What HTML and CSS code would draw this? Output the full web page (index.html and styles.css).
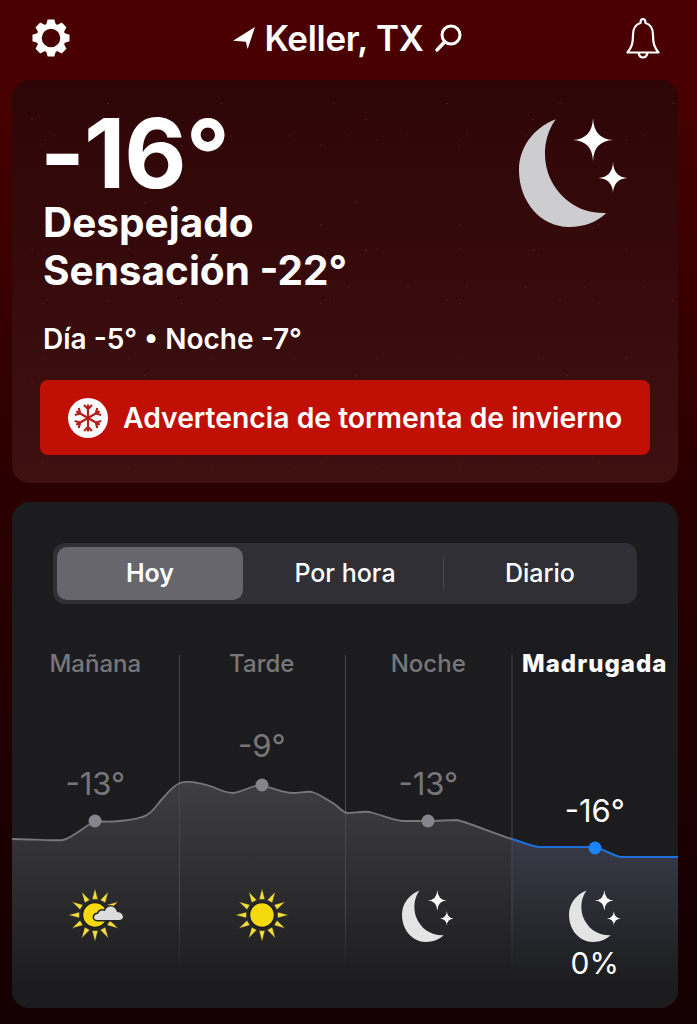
FILE: index.html
```html
<!DOCTYPE html>
<html lang="es">
<head>
  <meta charset="UTF-8" />
  <meta name="viewport" content="width=device-width, initial-scale=1" />
  <title>Keller, TX</title>
  <link rel="stylesheet" href="styles.css">
</head>
<body>

  <svg class="defs" width="0" height="0" aria-hidden="true">
    <symbol id="moon" viewBox="0 0 109 109">
      <path class="moon-body" d="M36.7 1.3C14 10 0 30 0 52C0 84 22 109 50 109C65 109 78 104 87.3 95C60 96 38 80 29 55C23 36 26 16 36.7 1.3Z" />
      <path class="moon-star" d="M74 0Q74.800 21 94 22Q74.800 23 74 43Q73.200 23 54 22Q73.200 21 74 0Z" />
      <path class="moon-star" d="M94 44Q94.700 59 108.500 60Q94.700 61 94 75Q93.300 61 79.500 60Q93.300 59 94 44Z" />
    </symbol>
    <symbol id="sun" viewBox="-28 -28 56 56">
      <g class="sun-rays">
        <path id="ray" d="M-3 -15.500L0 -27L3 -15.500Z" />
        <use href="#ray" transform="rotate(30)" />
        <use href="#ray" transform="rotate(60)" />
        <use href="#ray" transform="rotate(90)" />
        <use href="#ray" transform="rotate(120)" />
        <use href="#ray" transform="rotate(150)" />
        <use href="#ray" transform="rotate(180)" />
        <use href="#ray" transform="rotate(210)" />
        <use href="#ray" transform="rotate(240)" />
        <use href="#ray" transform="rotate(270)" />
        <use href="#ray" transform="rotate(300)" />
        <use href="#ray" transform="rotate(330)" />
      </g>
      <circle class="sun-disc" r="12.500" />
    </symbol>
  </svg>

  <header class="topbar">
    <svg class="icon-gear" viewBox="-20 -20 40 40" width="38" height="38" aria-hidden="true">
      <circle r="12.500" fill="none" stroke="#fff" stroke-width="5.500" />
      <g fill="#fff">
        <path id="tooth" d="M-3.500 -19.500H3.500L5.500 -13H-5.500Z" />
        <use href="#tooth" transform="rotate(45)" />
        <use href="#tooth" transform="rotate(90)" />
        <use href="#tooth" transform="rotate(135)" />
        <use href="#tooth" transform="rotate(180)" />
        <use href="#tooth" transform="rotate(225)" />
        <use href="#tooth" transform="rotate(270)" />
        <use href="#tooth" transform="rotate(315)" />
      </g>
    </svg>
    <div class="place">
      <svg viewBox="0 0 24 24" width="22" height="22" aria-hidden="true">
        <path d="M24 0L0 15L14 16L16 24Z" fill="#fff" />
      </svg>
      <span class="place-name">Keller, TX</span>
      <svg viewBox="0 0 30 30" width="30" height="30" aria-hidden="true">
        <circle cx="18" cy="12" r="9" fill="none" stroke="#fff" stroke-width="3" />
        <path d="M11.500 19L4 27" stroke="#fff" stroke-width="3.500" stroke-linecap="round" />
      </svg>
    </div>
    <svg class="icon-bell" viewBox="0 0 34 42" width="34" height="42" aria-hidden="true">
      <path d="M17 2C15 2 14.500 4 14.500 6C9 7.500 7 12 7 18C7 26 6 30 1.500 35.500H32.500C28 30 27 26 27 18C27 12 25 7.500 19.500 6C19.500 4 19 2 17 2ZM12.500 35.500C13 39 15 40.500 17 40.500C19 40.500 21 39 21.500 35.500" fill="none" stroke="#fff" stroke-width="2.200" stroke-linejoin="round" />
    </svg>
  </header>

  <section class="card now">
    <div class="now-row">
      <div>
        <div class="now-temp">-16°</div>
        <div class="now-line">Despejado</div>
        <div class="now-line">Sensación -22°</div>
      </div>
      <svg class="now-moon" width="109" height="109" aria-hidden="true"><use href="#moon" /></svg>
    </div>
    <p class="now-range">Día -5° • Noche -7°</p>
    <div class="alert">
      <svg class="alert-icon" viewBox="-20 -20 40 40" width="40" height="40" aria-hidden="true">
        <circle r="20" fill="#fff" />
        <g fill="none" stroke="#b3201c" stroke-width="2.200">
          <path id="arm" d="M0 0V-13.500M-4 -13L0 -9L4 -13" />
          <use href="#arm" transform="rotate(60)" />
          <use href="#arm" transform="rotate(120)" />
          <use href="#arm" transform="rotate(180)" />
          <use href="#arm" transform="rotate(240)" />
          <use href="#arm" transform="rotate(300)" />
        </g>
      </svg>
      <span>Advertencia de tormenta de invierno</span>
    </div>
  </section>

  <section class="card forecast">
    <div class="tabs">
      <div class="tab active">Hoy</div>
      <div class="tab tab-hour">Por hora</div>
      <div class="tab-sep"></div>
      <div class="tab tab-day">Diario</div>
    </div>

    <div class="chart">
      <svg class="chart-graph" viewBox="12 645 666 363" width="666" height="363" aria-hidden="true">
        <defs>
          <linearGradient id="fillGrey" x1="0" y1="782" x2="0" y2="985" gradientUnits="userSpaceOnUse">
            <stop offset="0" stop-color="#3e3e41" />
            <stop offset="1" stop-color="#1c1c1e" />
          </linearGradient>
          <linearGradient id="fillBlue" x1="0" y1="840" x2="0" y2="985" gradientUnits="userSpaceOnUse">
            <stop offset="0" stop-color="#383b47" />
            <stop offset="1" stop-color="#1c1c1e" />
          </linearGradient>
          <linearGradient id="rule" x1="0" y1="655" x2="0" y2="970" gradientUnits="userSpaceOnUse">
            <stop offset="0" stop-color="#48484c" />
            <stop offset="0.8" stop-color="#48484c" />
            <stop offset="1" stop-color="#48484c" stop-opacity="0" />
          </linearGradient>
        </defs>
        <path d="M12 839C30 839 50 841 63 840C72 838 85 826 95 821C105 822 112 822 120 821C130 820 140 819 147 815C155 810 158 803 163 798C169 791 174 785 180 783C186 781 194 781 213 787C220 790 226 793 233 793C242 792 252 785 262 785C272 788 283 793 293 793C300 793 306 791 312 792C320 794 327 800 333 803C338 806 342 812 347 813C355 813 362 811 370 812C382 815 393 821 404 821H428C438 821 447 820 457 820C470 823 495 834 512 839V1008H12Z" fill="url(#fillGrey)" />
        <path d="M512 839C522 842 530 846 539 847H595C603 849 612 855 620 857H678V1008H512Z" fill="url(#fillBlue)" />
        <path d="M179.500 655V970M345.500 655V970M512 655V970" stroke="url(#rule)" stroke-width="1" fill="none" />
        <path d="M12 839C30 839 50 841 63 840C72 838 85 826 95 821C105 822 112 822 120 821C130 820 140 819 147 815C155 810 158 803 163 798C169 791 174 785 180 783C186 781 194 781 213 787C220 790 226 793 233 793C242 792 252 785 262 785C272 788 283 793 293 793C300 793 306 791 312 792C320 794 327 800 333 803C338 806 342 812 347 813C355 813 362 811 370 812C382 815 393 821 404 821H428C438 821 447 820 457 820C470 823 495 834 512 839" fill="none" stroke="#77777b" stroke-width="1.800" />
        <path d="M512 839C522 842 530 846 539 847H595C603 849 612 855 620 857H678" fill="none" stroke="#1f6fd8" stroke-width="2" />
        <circle cx="95" cy="821" r="6.500" fill="#85858b" />
        <circle cx="262" cy="785" r="6.500" fill="#85858b" />
        <circle cx="428" cy="821" r="6.500" fill="#85858b" />
        <circle cx="595" cy="848" r="6.500" fill="#1a83f5" />
      </svg>

      <div class="periods">
        <div class="period">
          <div class="period-name">Mañana</div>
          <div class="period-temp" style="padding-top: 86px">-13°</div>
          <svg class="period-icon sun-icon" viewBox="-28 -28 56 56" width="56" height="56" aria-hidden="true">
            <use href="#sun" x="-28" y="-28" width="56" height="56" />
            <path class="sun-cloud" d="M2 5C-2 5 -2 -1 3 -1C4 -5 8 -5 10 -4C12 -10 20 -10 22 -3C26 -3 28 0 28 2C28 4 26 5 24 5Z" />
          </svg>
        </div>
        <div class="period">
          <div class="period-name">Tarde</div>
          <div class="period-temp" style="padding-top: 48px">-9°</div>
          <svg class="period-icon sun-icon" width="56" height="56" aria-hidden="true"><use href="#sun" /></svg>
        </div>
        <div class="period">
          <div class="period-name">Noche</div>
          <div class="period-temp" style="padding-top: 86px">-13°</div>
          <svg class="period-icon small-moon" width="52" height="52" aria-hidden="true"><use href="#moon" /></svg>
        </div>
        <div class="period current">
          <div class="period-name">Madrugada</div>
          <div class="period-temp" style="padding-top: 113px">-16°</div>
          <svg class="period-icon small-moon" width="52" height="52" aria-hidden="true"><use href="#moon" /></svg>
          <div class="period-rain">0%</div>
        </div>
      </div>
    </div>
  </section>

</body>
</html>
```

FILE: styles.css
```css
body {
  font-family: Inter, "Liberation Sans", sans-serif;
  background: linear-gradient(#4b0000 0, #480000 80px, #2b0000 490px, #140002 1024px);
  margin: 0;
  padding: 0 19px 16px 12px;
  height: 1008px;
  overflow: hidden;
  color: #fff;
}

.defs {
  position: absolute;
}

.topbar {
  height: 80px;
  display: flex;
  align-items: center;
  justify-content: space-between;
  padding: 0 18px 4px 20px;
  box-sizing: border-box;
}

.place {
  display: flex;
  align-items: center;
  gap: 9px;
}

.place-name {
  font-size: 35px;
  font-weight: 600;
  letter-spacing: -0.3px;
}

.card {
  border-radius: 18px;
  overflow: hidden;
}

/* current conditions */
.now {
  height: 403px;
  box-sizing: border-box;
  padding: 27px 28px 0;
  background-color: #340709;
  background-image:
    radial-gradient(circle at 12% 30%, #7a2a2a 0, transparent 1px),
    radial-gradient(circle at 63% 71%, #8a2c2c 0, transparent 1px),
    radial-gradient(circle at 85% 12%, #7a2a2a 0, transparent 1px),
    radial-gradient(circle at 40% 55%, #5f1f1f 0, transparent 1px),
    radial-gradient(circle at 22% 83%, #6b2222 0, transparent 1px),
    radial-gradient(circle at 71% 37%, #5f1f1f 0, transparent 1px),
    linear-gradient(#2e0507, #3f1010);
  background-size: 167px 131px, 211px 173px, 113px 197px, 83px 109px, 139px 79px, 59px 151px, 100% 100%;
}

.now-row {
  display: flex;
  justify-content: space-between;
  align-items: flex-start;
}

.now-temp {
  font-size: 96px;
  line-height: 92px;
  font-weight: 700;
  letter-spacing: -1px;
}

.now-line {
  font-size: 40.500px;
  line-height: 48px;
  font-weight: 700;
  padding-left: 3px;
}

.now-moon {
  margin: 11px 22px 0 0;
  color: #cdcdcf;
}

.moon-body {
  fill: currentColor;
}

.small-moon {
  color: #e4e4e4;
}

.moon-star {
  fill: #fff;
}

.now-range {
  margin: 27px 0 0;
  padding-left: 3px;
  font-size: 28px;
  line-height: 34px;
  font-weight: 600;
}

.alert {
  margin-top: 24px;
  height: 75px;
  background: #c00f05;
  border-radius: 8px;
  display: flex;
  align-items: center;
  gap: 15px;
  padding-left: 28px;
  font-size: 28.300px;
  font-weight: 600;
}

/* forecast */
.forecast {
  margin-top: 19px;
  height: 506px;
  background: #1c1c1e;
}

.tabs {
  margin: 41px 41px 0;
  height: 61px;
  box-sizing: border-box;
  padding: 4px;
  display: grid;
  grid-template-columns: 186px 200px 1px 1fr;
  align-items: center;
  background: #2f2f35;
  border-radius: 12px;
  font-size: 25px;
  font-weight: 500;
}

.tab {
  height: 53px;
  line-height: 53px;
  text-align: center;
}

.tab.active {
  background: #66666c;
  border-radius: 10px;
  font-weight: 600;
}

.tab-hour {
  padding-left: 4px;
}

.tab-day {
  padding-left: 3px;
}

.tab-sep {
  height: 33px;
  background: #48484d;
}

.chart {
  position: relative;
  margin-top: 41px;
  height: 363px;
}

.chart-graph {
  position: absolute;
  top: 0;
  left: 0;
}

.periods {
  position: relative;
  display: grid;
  grid-template-columns: repeat(4, 1fr);
  text-align: center;
  color: #77777b;
}

.period-name {
  height: 36px;
  padding-top: 1px;
  box-sizing: border-box;
  font-size: 24px;
  line-height: 36px;
  font-weight: 500;
}

.period-temp {
  height: 209px;
  box-sizing: border-box;
  font-size: 31px;
  line-height: 34px;
}

.period-icon {
  display: block;
  margin: 0 auto;
}

.sun-icon {
  margin-top: -3px;
  margin-bottom: -1px;
}

.sun-rays {
  fill: #f0dc3c;
  stroke: #1c1c1e;
  stroke-width: 0.5;
}

.sun-disc {
  fill: #f5d90f;
  stroke: #1c1c1e;
  stroke-width: 1.5;
}

.sun-cloud {
  fill: #dcdcdc;
  stroke: #26262a;
  stroke-width: 3;
  paint-order: stroke;
}

.current {
  color: #fff;
}

.current .period-name {
  font-weight: 800;
  letter-spacing: 1px;
  white-space: nowrap;
}

.period-rain {
  margin-top: 4px;
  font-size: 30px;
  line-height: 34px;
}
```
